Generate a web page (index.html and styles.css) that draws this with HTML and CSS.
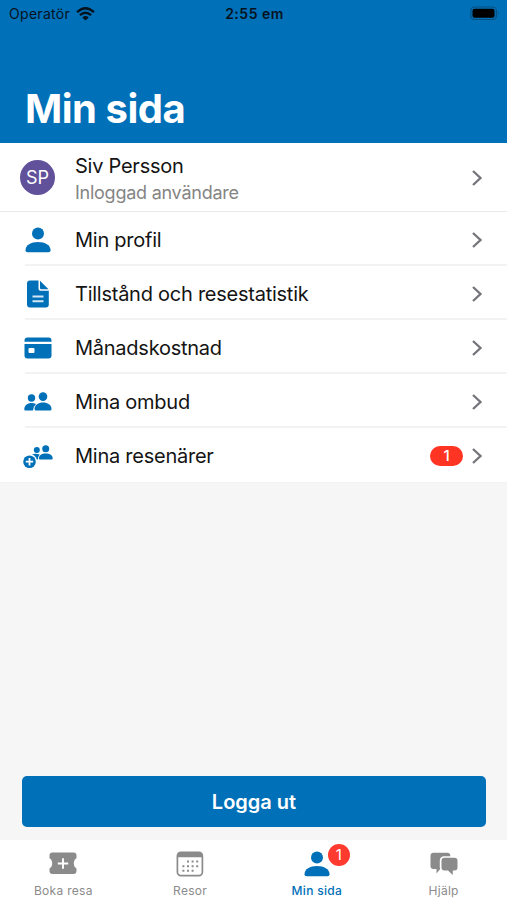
FILE: index.html
```html
<!DOCTYPE html>
<html lang="sv">
<head>
    <meta charset="UTF-8">
    <meta name="viewport" content="width=device-width, initial-scale=1.0">
    <title>Min sida</title>
    <link rel="stylesheet" href="styles.css">
</head>
<body>
    <svg class="symbols" width="0" height="0">
        <symbol id="chevron" viewBox="0 0 12 18">
            <path d="M2 2l7.500 7L2 16" fill="none" stroke="#74747a" stroke-width="2.300"/>
        </symbol>
        <symbol id="person" viewBox="0 0 26 26">
            <circle cx="13" cy="6.500" r="6"/>
            <path d="M.5 23.200C.5 18 6 15 13 15s12.500 3 12.500 8.200q0 2-2 2h-21q-2 0-2-2z"/>
        </symbol>
    </svg>

    <div class="screen">
        <div class="header">
            <div class="status-bar">
                <div class="carrier">
                    <span>Operatör</span>
                    <svg width="19" height="14" viewBox="0 0 19 14">
                        <path d="M1 5.200Q9.500-2.600 18 5.200M3.900 8.200Q9.500 3.200 15.100 8.200" fill="none" stroke="#06131e" stroke-width="2.300"/>
                        <path d="M6.300 10.400Q9.500 7.700 12.700 10.400L9.500 13.600z" fill="#06131e"/>
                    </svg>
                </div>
                <div class="time">2:55 em</div>
                <div class="battery">
                    <svg width="30" height="15" viewBox="0 0 30 15">
                        <rect x=".8" y="1" width="25.600" height="12.500" rx="3.800" fill="none" stroke="#07507f" stroke-width="1.200"/>
                        <rect x="2.500" y="2.800" width="22" height="9" rx="2" fill="#000"/>
                        <path d="M28 5.200q1.800 2 0 4z" fill="#07507f"/>
                    </svg>
                </div>
            </div>
            <h1 class="page-title">Min sida</h1>
        </div>

        <div class="content">
            <div class="menu">
                <div class="user-row">
                    <div class="row-icon"><div class="avatar">SP</div></div>
                    <div class="user-details">
                        <div class="user-name">Siv Persson</div>
                        <div class="user-status">Inloggad användare</div>
                    </div>
                    <svg class="chevron"><use href="#chevron"/></svg>
                </div>
                <div class="menu-row">
                    <div class="row-icon">
                        <svg width="26" height="26"><use href="#person"/></svg>
                    </div>
                    <div class="row-label">Min profil</div>
                    <svg class="chevron"><use href="#chevron"/></svg>
                </div>
                <div class="menu-row">
                    <div class="row-icon">
                        <svg width="22" height="28" viewBox="0 0 22 28">
                            <path d="M3 .5h8.500v8.300q0 2 2 2h8.300v13.700q0 3-3 3H3q-3 0-3-3v-21q0-3 3-3z"/>
                            <path d="M13 .8l8.500 8.500h-7.300q-1.200 0-1.200-1.200z"/>
                            <path d="M5.500 16.500h11M5.500 21.300h11" stroke="#d4e7f5" stroke-width="2"/>
                        </svg>
                    </div>
                    <div class="row-label">Tillstånd och resestatistik</div>
                    <svg class="chevron"><use href="#chevron"/></svg>
                </div>
                <div class="menu-row">
                    <div class="row-icon">
                        <svg width="28" height="22" viewBox="0 0 28 22">
                            <path d="M.5 4.800V3.500q0-3 3-3h21q3 0 3 3v1.300z"/>
                            <path d="M.5 7h27v11.500q0 3-3 3h-21q-3 0-3-3z"/>
                            <rect x="4.500" y="11" width="6" height="5" rx="1" fill="#fff"/>
                        </svg>
                    </div>
                    <div class="row-label">Månadskostnad</div>
                    <svg class="chevron"><use href="#chevron"/></svg>
                </div>
                <div class="menu-row">
                    <div class="row-icon">
                        <svg width="28" height="20" viewBox="0 0 28 20">
                            <circle cx="7.500" cy="6" r="3.700"/>
                            <circle cx="19" cy="4.600" r="4.300"/>
                            <path d="M.3 17.500C.3 13.300 3.500 11 7.500 11q2.700 0 4.500.9Q9.300 14.300 9 18.500H1.300q-1 0-1-1z"/>
                            <path d="M10.500 17C10.600 12.700 14.500 10.500 19 10.500s8.500 2.200 8.500 6.500q0 1.500-1.500 1.500H12q-1.500 0-1.500-1.500z"/>
                        </svg>
                    </div>
                    <div class="row-label">Mina ombud</div>
                    <svg class="chevron"><use href="#chevron"/></svg>
                </div>
                <div class="menu-row">
                    <div class="row-icon">
                        <svg width="30" height="26" viewBox="0 0 30 26">
                            <circle cx="13.800" cy="7" r="3"/>
                            <circle cx="22.700" cy="5.700" r="3.500"/>
                            <path d="M9 11.300q3.500-1 7.700.2-1.700 2-1.900 4.900h-1Q12.500 12.500 9 11.300z"/>
                            <path d="M15.900 15.500C15.900 12 18.700 10.400 22.700 10.400s7 1.600 7 5.100q0 1.100-1.100 1.100H17q-1.100 0-1.100-1.100z"/>
                            <circle cx="6.500" cy="18.700" r="6.300"/>
                            <path d="M6.500 15v7.400M2.800 18.700h7.400" stroke="#fff" stroke-width="1.800"/>
                        </svg>
                    </div>
                    <div class="row-label">Mina resenärer</div>
                    <div class="row-badge">1</div>
                    <svg class="chevron"><use href="#chevron"/></svg>
                </div>
            </div>

            <div class="logout-button">Logga ut</div>
        </div>

        <div class="tab-bar">
            <div class="tab">
                <div class="tab-icon">
                    <svg width="28" height="23" viewBox="0 0 28 23">
                        <path d="M3.500.5h21q3 0 3 3v2.700q-2.700 1.400-2.700 5.100t2.700 5.100v2.600q0 3-3 3h-21q-3 0-3-3v-2.600q2.700-1.400 2.700-5.100T.5 6.200V3.500q0-3 3-3z"/>
                        <path d="M14 6.300v10.400M8.800 11.500h10.400" stroke="#fff" stroke-width="1.900"/>
                    </svg>
                </div>
                <div class="tab-label">Boka resa</div>
            </div>
            <div class="tab">
                <div class="tab-icon">
                    <svg width="28" height="26" viewBox="0 0 28 26">
                        <rect x="1.400" y="1.400" width="25" height="23.200" rx="3.500" fill="#fff" stroke="#8b8b8b" stroke-width="1.700"/>
                        <path d="M1.200 6.200V4.500q0-3.300 3.300-3.300h18.800q3.300 0 3.300 3.300v1.700z"/>
                        <path d="M11 10.600h12M6.400 15.200h16.600M6.400 19.700h12" stroke="#8b8b8b" stroke-width="2" stroke-dasharray="2 2.600"/>
                    </svg>
                </div>
                <div class="tab-label">Resor</div>
            </div>
            <div class="tab active">
                <div class="tab-icon">
                    <svg width="26" height="26"><use href="#person"/></svg>
                    <div class="tab-badge">1</div>
                </div>
                <div class="tab-label">Min sida</div>
            </div>
            <div class="tab">
                <div class="tab-icon">
                    <svg width="28" height="24" viewBox="0 0 28 24">
                        <path d="M3.500.8h13.800q3 0 3 3v.5h-6q-4.500 0-4.500 4.500v6.500q0 1 .4 1.800L6.500 21.500V17h-3q-3 0-3-3V3.800q0-3 3-3z"/>
                        <path d="M14.500 5.700h10q3 0 3 3v6.800q0 3-3 3h-1.700v4.500l-4.800-4.500h-3.500q-3 0-3-3V8.700q0-3 3-3z"/>
                    </svg>
                </div>
                <div class="tab-label">Hjälp</div>
            </div>
        </div>
    </div>
</body>
</html>
```
FILE: styles.css
```css
body {
    font-family: Inter, 'Liberation Sans', sans-serif;
    margin: 0;
    background-color: #f6f6f6;
}
.symbols {
    position: absolute;
}
.screen {
    width: 507px;
    height: 900px;
    display: flex;
    flex-direction: column;
    overflow: hidden;
}
.header {
    height: 142.5px;
    background-color: #0070b8;
    display: flex;
    flex-direction: column;
    justify-content: space-between;
}
.status-bar {
    height: 27px;
    padding: 0 7px 0 9px;
    display: grid;
    grid-template-columns: 1fr auto 1fr;
    align-items: center;
    font-size: 14px;
    color: #06131e;
}
.carrier {
    display: flex;
    align-items: center;
    gap: 6px;
    letter-spacing: 0.3px;
}
.time {
    font-weight: 600;
    letter-spacing: 0.5px;
}
.battery {
    display: flex;
    justify-content: flex-end;
}
.page-title {
    margin: 0;
    padding: 0 0 9px 25px;
    font-size: 40px;
    line-height: 50px;
    font-weight: 700;
    letter-spacing: -0.5px;
    color: #fff;
}
.content {
    flex: 1;
    display: flex;
    flex-direction: column;
    justify-content: space-between;
}
.menu {
    background-color: #fff;
    border-bottom: 1px solid #f2f2f2;
}
.user-row,
.menu-row {
    display: flex;
    align-items: center;
    box-sizing: border-box;
    padding: 2px 24px 0 0;
}
.user-row {
    height: 69px;
    border-bottom: 1px solid #e9e9e9;
}
.menu-row {
    height: 54.2px;
    background: linear-gradient(#f3f3f3, #f3f3f3) 25px 100% / 100% 2px no-repeat;
}
.menu-row:last-child {
    background: none;
}
.row-icon {
    width: 75px;
    display: flex;
    justify-content: center;
    fill: #0070b8;
}
.row-icon svg {
    display: block;
}
.avatar {
    width: 35px;
    height: 35px;
    border-radius: 50%;
    background-color: #61519b;
    color: #fff;
    font-size: 18px;
    line-height: 35px;
    text-align: center;
}
.user-details,
.row-label {
    flex: 1;
    color: #141414;
    font-size: 20px;
    letter-spacing: -0.25px;
}
.user-details {
    padding-top: 4px;
}
.user-name {
    line-height: 27px;
}
.user-status {
    font-size: 18px;
    line-height: 26px;
    color: #858585;
}
.row-badge {
    width: 33px;
    height: 20px;
    margin-right: 8px;
    border-radius: 10px;
    background-color: #ff3422;
    color: #fff;
    font-size: 15px;
    font-weight: 500;
    line-height: 20px;
    text-align: center;
}
.chevron {
    width: 12px;
    height: 18px;
}
.logout-button {
    height: 51px;
    margin: 0 21px 13px 22px;
    border-radius: 5px;
    background-color: #0070b8;
    color: #fff;
    font-size: 20px;
    font-weight: 600;
    line-height: 52px;
    text-align: center;
}
.tab-bar {
    height: 60px;
    background-color: #fff;
    display: flex;
}
.tab {
    flex: 1;
    display: flex;
    flex-direction: column;
    align-items: center;
    color: #8b8b8b;
    fill: #8b8b8b;
}
.tab-icon {
    position: relative;
    height: 27px;
    margin-top: 10px;
    display: flex;
    align-items: center;
}
.tab-label {
    margin-top: 5px;
    font-size: 12px;
    line-height: 18px;
    letter-spacing: 0.3px;
}
.tab.active {
    color: #0070b8;
    fill: #0070b8;
}
.tab.active .tab-label {
    font-weight: 500;
}
.tab-badge {
    position: absolute;
    top: -6px;
    left: 24px;
    width: 22px;
    height: 22px;
    border-radius: 50%;
    background-color: #ff3b30;
    color: #fff;
    font-size: 15px;
    line-height: 22px;
    text-align: center;
}
```
